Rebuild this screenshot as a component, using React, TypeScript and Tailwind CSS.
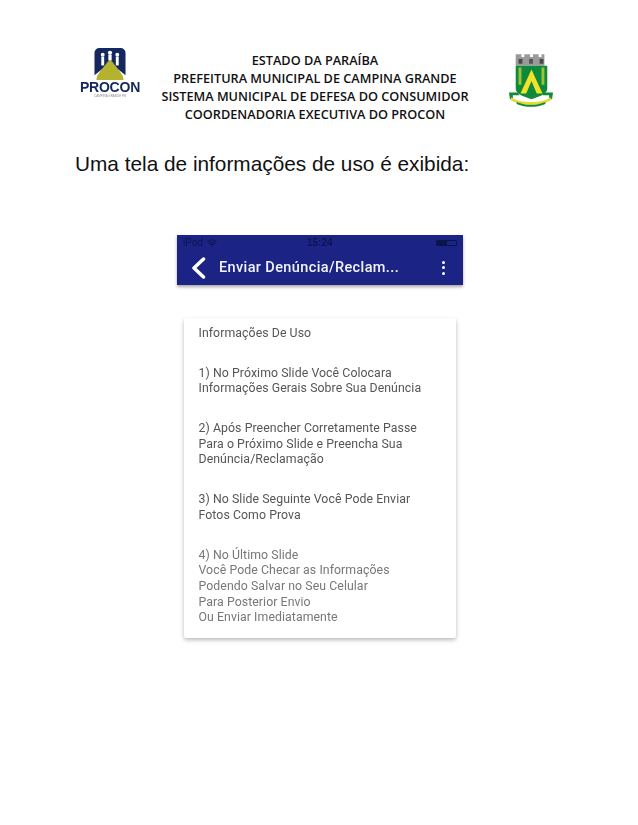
import React from 'react'
import { Wifi } from 'lucide-react'

function ProconLogo() {
  return (
    <div className="flex w-[60px] flex-col items-center blur-[0.3px]">
      <svg width="32" height="32" viewBox="0 0 32 33">
        <path d="M5 0h22a5 5 0 0 1 5 5v23L22 20 16 13 10 20 0 28V5a5 5 0 0 1 5-5z" fill="#14285f" />
        <path d="M2 33C2 27 9 21 13 15c1.500-2 4.500-2 6 0 4 6 11 12 11 18z" fill="#b5b22e" />
        <circle cx="8.500" cy="7" r="2" fill="#fff" />
        <rect x="7" y="9" width="3" height="9" fill="#fff" />
        <circle cx="16" cy="5" r="2.200" fill="#fff" />
        <rect x="14.300" y="7" width="3.400" height="6" fill="#fff" />
        <circle cx="23.500" cy="7" r="2" fill="#fff" />
        <rect x="22" y="9" width="3" height="9" fill="#fff" />
      </svg>
      <span className="font-['Liberation_Sans',sans-serif] text-[14px] leading-[14px] font-bold tracking-[-0.2px] text-[#14285f]">
        PROCON
      </span>
      <span className="font-['Liberation_Sans',sans-serif] text-[3px] leading-[4px] text-[#8a8f9e]">CAMPINA GRANDE PB</span>
    </div>
  )
}

function Crest() {
  return (
    <svg width="44" height="54" viewBox="0 0 46 56" className="blur-[0.4px]">
      <path d="M8 0h6v3h3V0h6v3h3V0h6v3h3V0h3v12H8z" fill="#9a9a9a" transform="translate(-1 1)" />
      <rect x="10" y="6" width="4" height="5" fill="#4a4a4a" />
      <rect x="21" y="6" width="4" height="5" fill="#555" />
      <rect x="32" y="6" width="4" height="5" fill="#4a4a4a" />
      <path d="M7 13h33v24c0 5-6 8-16.500 11C13 45 7 42 7 37z" fill="#0f8a3a" />
      <path d="M23.500 17 35 42h-6l-5.500-13L18 42h-6z" fill="#f2e22a" />
      <path d="M10 15h3v18h-3zM34 15h3v18h-3z" fill="#e8de3a" opacity="0.65" />
      <path d="M0 41h9l2 3H4v4H1z" fill="#0f8a3a" />
      <path d="M46 41h-9l-2 3h7v4h3z" fill="#0f8a3a" />
      <path d="M2 46c6 4 13 5 21 5s15-1 21-5v3c-6 4-13 5-21 5S8 53 2 49z" fill="#e6dc28" />
      <path d="M8 51c5 2 10 3 15 3s10-1 15-3v2c-5 2-10 3-15 3s-10-1-15-3z" fill="#0f8a3a" />
    </svg>
  )
}

function Block({ lines, className }: { lines: string[]; className?: string }) {
  return (
    <div className={className}>
      {lines.map((l) => (
        <div key={l} className="h-[15.7px] leading-[15.7px] whitespace-nowrap">
          {l}
        </div>
      ))}
    </div>
  )
}

export default function App() {
  return (
    <div className="h-[825px] w-[638px] overflow-hidden bg-white">
      <div className="flex items-start pt-[48px] pl-[80px]">
        <ProconLogo />
        <div className="mt-[3px] ml-[21px] w-[308px] text-center font-['Open_Sans',sans-serif] text-[12.7px] leading-[18px] font-semibold text-[#111] whitespace-nowrap">
          <div>ESTADO DA PARAÍBA</div>
          <div>PREFEITURA MUNICIPAL DE CAMPINA GRANDE</div>
          <div>SISTEMA MUNICIPAL DE DEFESA DO CONSUMIDOR</div>
          <div>COORDENADORIA EXECUTIVA DO PROCON</div>
        </div>
        <div className="mt-[5px] ml-[40px]">
          <Crest />
        </div>
      </div>

      <h1 className="mt-[29px] ml-[75px] font-['Liberation_Sans',sans-serif] text-[20.8px] leading-[24px] font-normal text-[#111]">
        Uma tela de informações de uso é exibida:
      </h1>

      <div className="mt-[59px] ml-[177px] w-[286px] bg-[#1b2484] shadow-[0_2px_3px_rgba(0,0,0,0.35)]">
        <div className="relative flex h-[15px] items-center justify-between px-[6px] font-['Liberation_Sans',sans-serif] text-[10px] text-[#0c1450] blur-[0.4px]">
          <div className="flex items-center gap-[4px]">
            <span>iPod</span>
            <Wifi size={10} strokeWidth={2.5} />
          </div>
          <span className="absolute left-[130px] font-bold">15:24</span>
          <div className="flex h-[6px] w-[21px] items-stretch rounded-[1px] border border-[#0c1450]">
            <div className="w-[10px] bg-[#0c1450]" />
          </div>
        </div>
        <div className="flex h-[35px] items-center pr-[18px] pl-[14px] blur-[0.3px]">
          <svg width="15" height="22" viewBox="0 0 15 22">
            <path d="M12.500 2 3 11l9.500 9" fill="none" stroke="#fff" strokeWidth="3.500" strokeLinecap="round" strokeLinejoin="round" />
          </svg>
          <span className="ml-[13px] flex-1 font-['Roboto',sans-serif] text-[14.5px] font-medium tracking-[0.38px] text-[#f3f4fb]">
            Enviar Denúncia/Reclam...
          </span>
          <div className="flex flex-col gap-[2.500px]">
            <div className="h-[3px] w-[3px] rounded-full bg-white" />
            <div className="h-[3px] w-[3px] rounded-full bg-white" />
            <div className="h-[3px] w-[3px] rounded-full bg-white" />
          </div>
        </div>
      </div>

      <div className="mt-[33px] ml-[184px] h-[320px] w-[272px] rounded-b-[2px] bg-white pt-[8px] pl-[14.500px] font-['Roboto',sans-serif] text-[12.3px] tracking-[0.07px] text-[#555] shadow-[0_2px_4px_rgba(0,0,0,0.28)]">
        <div className="blur-[0.35px]">
          <Block lines={['Informações De Uso']} />
          <Block className="mt-[24px]" lines={['1) No Próximo Slide Você Colocara', 'Informações Gerais Sobre Sua Denúncia']} />
          <Block
            className="mt-[24px]"
            lines={['2) Após Preencher Corretamente Passe', 'Para o Próximo Slide e Preencha Sua', 'Denúncia/Reclamação']}
          />
          <Block className="mt-[24px]" lines={['3) No Slide Seguinte Você Pode Enviar', 'Fotos Como Prova']} />
          <Block
            className="mt-[24px] text-[#777]"
            lines={[
              '4) No Último Slide',
              'Você Pode Checar as Informações',
              'Podendo Salvar no Seu Celular',
              'Para Posterior Envio',
              'Ou Enviar Imediatamente',
            ]}
          />
        </div>
      </div>
    </div>
  )
}
